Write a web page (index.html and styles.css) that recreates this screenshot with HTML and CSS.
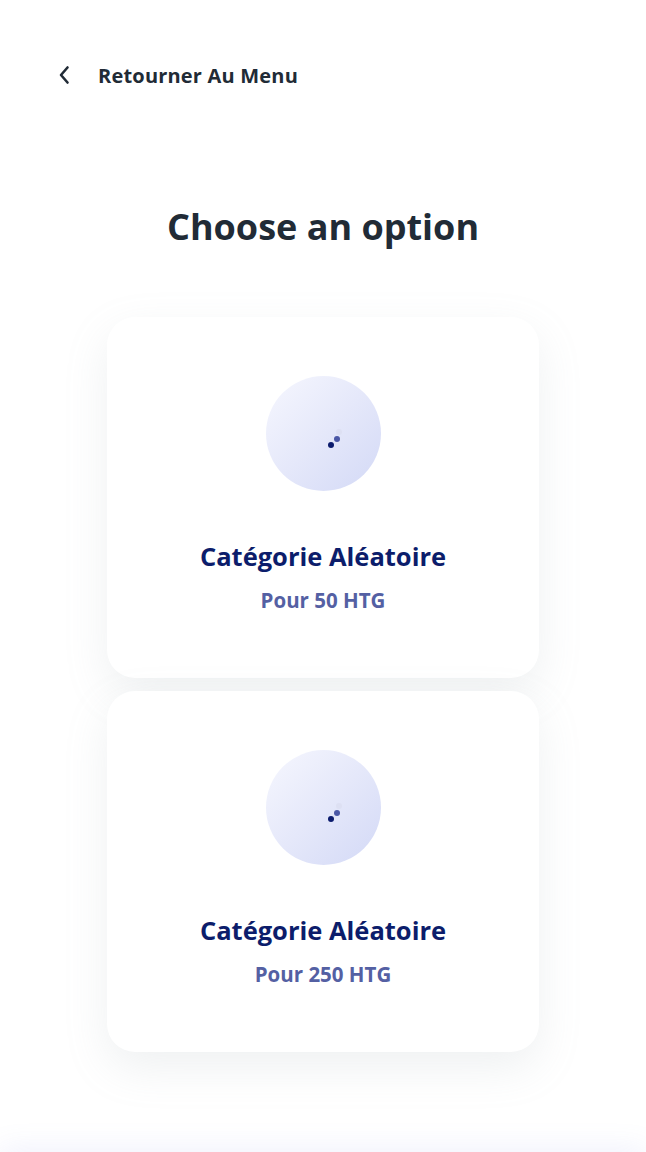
FILE: index.html
```html
<!DOCTYPE html>
<html lang="fr">
<head>
<meta charset="utf-8">
<title>Choose an option</title>
<link rel="stylesheet" href="styles.css">
</head>
<body>
<div class="page">
  <header class="topbar">
    <a class="back" href="#">
      <svg class="chev" width="14" height="22" viewBox="0 0 14 22" aria-hidden="true"><path d="M10.5 3.5 L4 11 L10.5 18.5" fill="none" stroke="#212b36" stroke-width="2.6" stroke-linecap="round" stroke-linejoin="round"/></svg>
      <span>Retourner Au Menu</span>
    </a>
  </header>
  <h1 class="title">Choose an option</h1>
  <div class="cards">
    <div class="card">
      <div class="icon">
        <svg width="20" height="24" viewBox="0 0 20 24" aria-hidden="true"><circle cx="15" cy="4" r="3" fill="#dde0f3"/><circle cx="13" cy="11" r="3" fill="#4a57a6"/><circle cx="7" cy="17" r="3" fill="#0b1b6d"/></svg>
      </div>
      <div class="name">Catégorie Aléatoire</div>
      <div class="price">Pour 50 HTG</div>
    </div>
    <div class="card">
      <div class="icon">
        <svg width="20" height="24" viewBox="0 0 20 24" aria-hidden="true"><circle cx="15" cy="4" r="3" fill="#dde0f3"/><circle cx="13" cy="11" r="3" fill="#4a57a6"/><circle cx="7" cy="17" r="3" fill="#0b1b6d"/></svg>
      </div>
      <div class="name">Catégorie Aléatoire</div>
      <div class="price">Pour 250 HTG</div>
    </div>
  </div>
</div>
<div class="bottom-glow"></div>
</body>
</html>
```
FILE: styles.css
```css
* { box-sizing: border-box; }
html, body { margin: 0; padding: 0; background: #fff; }
body {
  font-family: "Open Sans", "Noto Sans", sans-serif;
  color: #212b36;
  overflow: hidden;
  height: 1152px;
}
.page { display: flex; flex-direction: column; }
.topbar { padding: 62px 0 0 57px; }
.back {
  display: inline-flex;
  align-items: center;
  gap: 27px;
  text-decoration: none;
  color: #212b36;
  font-weight: 700;
  font-size: 20px;
  height: 26px;
}
.back span { letter-spacing: 0.2px; }
.chev { display: block; }
.title {
  margin: 112px 0 0;
  text-align: center;
  font-size: 36px;
  font-weight: 700;
  line-height: 48px;
  color: #212b36;
}
.cards {
  margin-top: 66px;
  display: flex;
  flex-direction: column;
  align-items: center;
  gap: 13px;
}
.card {
  width: 432px;
  height: 361px;
  border-radius: 28px;
  background: #fff;
  box-shadow: 0 16px 44px rgba(145, 158, 171, 0.15);
  display: flex;
  flex-direction: column;
  align-items: center;
  padding-top: 59px;
}
.icon {
  width: 115px;
  height: 115px;
  border-radius: 50%;
  background: linear-gradient(135deg, #f6f7fe 0%, #e5e8fa 50%, #d3d9f6 100%);
  display: flex;
  align-items: center;
  justify-content: center;
}
.icon svg { margin-left: 22px; margin-top: 12px; }
.name {
  margin-top: 48px;
  font-size: 25.5px;
  font-weight: 700;
  line-height: 34px;
  color: #0c1d6b;
}
.price {
  margin-top: 14px;
  font-size: 20.5px;
  font-weight: 700;
  line-height: 26px;
  color: #5460a3;
}
.bottom-glow {
  position: fixed;
  left: 0;
  right: 0;
  top: 1160px;
  height: 60px;
  box-shadow: 0 -10px 30px rgba(120, 130, 230, 0.12);
}
```
